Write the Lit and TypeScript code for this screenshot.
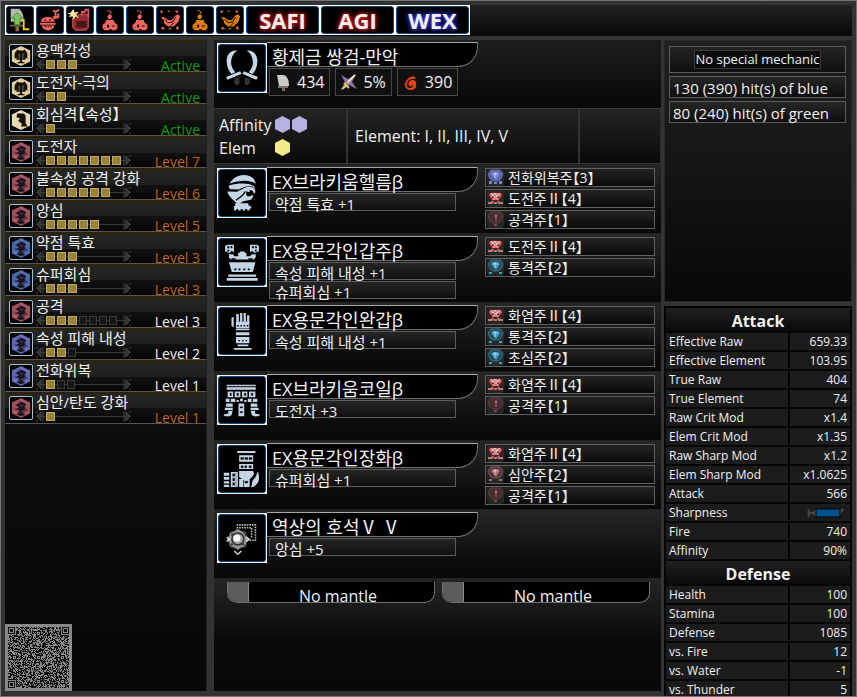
import { LitElement, html, svg, css, nothing } from "lit";
import { customElement, property } from "lit/decorators.js";

type Tone = "gold" | "bone" | "red" | "blue" | "violet";
interface Skill { name: string; tone: Tone; on: number; off?: number; level: string; state: string }
interface Deco { name: string; slot: number; hue: string }
interface Gear { icon: string; name: string; skills: string[]; decos: Deco[] }

const skills: Skill[] = [
  { name: "용맥각성", tone: "gold", on: 3, level: "Active", state: "active" },
  { name: "도전자-극의", tone: "gold", on: 2, level: "Active", state: "active" },
  { name: "회심격【속성】", tone: "bone", on: 1, level: "Active", state: "active" },
  { name: "도전자", tone: "red", on: 7, level: "Level 7", state: "max" },
  { name: "불속성 공격 강화", tone: "red", on: 6, level: "Level 6", state: "max" },
  { name: "앙심", tone: "red", on: 5, level: "Level 5", state: "max" },
  { name: "약점 특효", tone: "blue", on: 3, level: "Level 3", state: "max" },
  { name: "슈퍼회심", tone: "blue", on: 3, level: "Level 3", state: "max" },
  { name: "공격", tone: "red", on: 3, off: 4, level: "Level 3", state: "part" },
  { name: "속성 피해 내성", tone: "violet", on: 2, off: 1, level: "Level 2", state: "part" },
  { name: "전화위복", tone: "violet", on: 1, off: 2, level: "Level 1", state: "part" },
  { name: "심안/탄도 강화", tone: "red", on: 1, level: "Level 1", state: "max" },
];

const d = (name: string, slot: number, hue: string): Deco => ({ name, slot, hue });
const gear: Gear[] = [
  { icon: "helm", name: "EX브라키움헬름β", skills: ["약점 특효 +1"], decos: [d("전화위복주", 3, "#7484d8"), d("도전주Ⅱ", 4, "#d07474"), d("공격주", 1, "#8a4348")] },
  { icon: "chest", name: "EX용문각인갑주β", skills: ["속성 피해 내성 +1", "슈퍼회심 +1"], decos: [d("도전주Ⅱ", 4, "#d07474"), d("통격주", 2, "#3d9cc8")] },
  { icon: "arm", name: "EX용문각인완갑β", skills: ["속성 피해 내성 +1"], decos: [d("화염주Ⅱ", 4, "#d07474"), d("통격주", 2, "#3d9cc8"), d("초심주", 2, "#3d9cc8")] },
  { icon: "waist", name: "EX브라키움코일β", skills: ["도전자 +3"], decos: [d("화염주Ⅱ", 4, "#d07474"), d("공격주", 1, "#8a4348")] },
  { icon: "leg", name: "EX용문각인장화β", skills: ["슈퍼회심 +1"], decos: [d("화염주Ⅱ", 4, "#d07474"), d("심안주", 2, "#a8686e"), d("공격주", 1, "#8a4348")] },
  { icon: "charm", name: "역상의 호석Ⅴ Ⅴ", skills: ["앙심 +5"], decos: [] },
];

const attack: [string, string][] = [
  ["Effective Raw", "659.33"], ["Effective Element", "103.95"], ["True Raw", "404"], ["True Element", "74"],
  ["Raw Crit Mod", "x1.4"], ["Elem Crit Mod", "x1.35"], ["Raw Sharp Mod", "x1.2"], ["Elem Sharp Mod", "x1.0625"],
  ["Attack", "566"], ["Sharpness", ""], ["Fire", "740"], ["Affinity", "90%"],
];
const defense: [string, string][] = [
  ["Health", "100"], ["Stamina", "100"], ["Defense", "1085"], ["vs. Fire", "12"], ["vs. Water", "-1"], ["vs. Thunder", "5"],
];

const powder = svg`
  <path d="M12 5h2l2 1v2l-2 1" fill="none" stroke="currentColor" stroke-width="1"/>
  <path d="M12 11l2-2 3 1v2l-1 1 1 3h-5l1-3z" fill="currentColor"/>
  <path d="M11 15h8l1 3 3 2v4l-2 2H9l-2-2v-4l3-2z" fill="currentColor"/>
  <path d="M12 20h2v3h-2zM17 21h3v1h-3zM14 25h3v1h-3zM9 23h1v1H9zM13 14h3v1h-3z" fill="#000"/>`;
const pepper = svg`
  <path d="M5 12h4l4 3 4 0 4-5 3-1 2 2-2 6-5 5-6 0-4-3-1-4z" fill="currentColor"/>
  <path d="M9 14l4 4 5-1 3-5M15 22l4-4" stroke="#000" stroke-width="1" fill="none"/>
  <path d="M4 5h4l-2 3zM12 5h3l-1 2zM20 5h4l-1 3zM5 25l2-3 3 3zM13 25l2-2 2 2zM21 25l2-4 2 4z" fill="currentColor"/>`;

const buffs = [
  { label: "Long stay up", color: "#bbb", art: svg`
    <path d="M5 3h9c4 3 5 8 5 14H5z" fill="#b6b8b4"/><path d="M4 20h15v2H4z" fill="#7b5635"/><path d="M10 22h4v5h-4z" fill="#8d6a45"/>
    <path d="M12 7l6 6h-3v7H9v-7H6z" fill="#7cc45a" stroke="#4a8a38" stroke-width="1"/>
    <path d="M19 14v11h6" fill="none" stroke="#f6c800" stroke-width="2"/>` },
  { label: "Meal", color: "#f26660", art: svg`
    <path d="M5 17c0-7 15-7 15 0zM4 18h17v2H4zM6 21h14c-2 7-12 7-14 0z" fill="currentColor"/>
    <path d="M18 5l3 1 4-2M21 6v7h-2M18 12h6v-4" fill="none" stroke="currentColor" stroke-width="2"/>
    <path d="M9 15h2M14 15h2M10 21v2M13 21v2M16 21v2" stroke="#000"/>` },
  { label: "Demondrug", color: "#f26660", art: svg`
    <path d="M14 9h10v14l-2 3H10l-3-3V13z" fill="#8f2d31" stroke="#c95557" stroke-width="1"/><path d="M11 16h11v7H11z" fill="#4c1418"/>
    <path d="M17 10V6l3 1 1-3h3v8" fill="none" stroke="#d45c5c" stroke-width="2"/>
    <path d="M8 3l1 4 5-1-3 3 3 4-4-2-2 4-1-4-4 1 2-3-4-1 4-1z" fill="#ffe79a"/>` },
  { label: "Might seed", color: "#f26660", art: powder },
  { label: "Might pill", color: "#f26660", art: powder },
  { label: "Dash juice", color: "#f26660", art: pepper },
  { label: "Armor seed", color: "#de7c10", art: powder },
  { label: "Armor skin", color: "#de7c10", art: pepper },
];

const gearArt: Record<string, unknown> = {
  swords: svg`<g fill="#c4d5e6"><path d="M60 20C38 18 26 34 27 56c1 16 6 28 15 38l12-6C44 76 40 66 41 54c1-14 7-26 19-34zM90 20c22-2 34 14 33 36-1 16-6 28-15 38l-12-6c10-12 14-22 13-34-1-14-7-26-19-34z"/>
    <path d="M25 103l44-18 5 8-44 19zM125 103L81 85l-5 8 44 19z"/></g>
    <path d="M52 107l14-1 1 18-8 6-9-8zM98 107l-14-1-1 18 8 6 9-8z" fill="#30353a"/>`,
  helm: svg`<g fill="#c4d5e6"><path d="M36 46C45 30 60 20 80 19c20 0 35 9 38 27-20-12-48-12-82 0z"/>
    <path d="M36 51c28-8 60-8 76 2l6 14-10-12c-18-4-30 2-42 9l-26-1c-7-2-8-8-4-12z"/>
    <path d="M29 70l30 1 24-12c14-8 34-4 34 14l-5 5c0-14-20-17-24-4-2 8 5 13 13 11l6-4 4 3-8 12-24 5-15 10C47 96 34 87 29 70z"/>
    <path d="M92 65h7v7h-7z"/><path d="M52 107h43v6l9 4v5l-5 3v5h-8v-5h-6v5h-8v-5h-6v5h-8v-5h-6v5h-7v-8l-1-5 6-4z"/></g>
    <path d="M56 98l20-15 10-13" fill="none" stroke="#000" stroke-width="4"/>`,
  chest: svg`<g fill="#c4d5e6"><path d="M22 25l6-4h22v24l-7-5-7 7-14-6zM100 21h22l6 4v16l-14 6-7-7-7 5z"/>
    <path d="M34 51h13l4 6h12V46h6v-4h14v4h6v11h12l4-6h13v10l-6 6H40l-6-6z"/>
    <path d="M34 76h83l-8 30H43zM32 114h87v7H32zM27 125h97v9H27z"/></g>
    <path d="M29 26h6v6h-6zM39 26h6v6h-6zM29 37h6v5h-6zM106 26h6v6h-6zM116 26h6v6h-6zM115 37h6v5h-6zM51 95h6v6h-6zM64 95h6v6h-6zM79 95h6v6h-6zM93 95h6v6h-6zM42 63h13v5H42zM95 63h13v5H95z" fill="#000"/>`,
  arm: svg`<g fill="#c4d5e6"><path d="M57 22h8v28h-8zM69 19h7v30h-7zM80 19h7v30h-7zM91 26h7v24h-7zM42 33l7-2v32l-7-4z"/>
    <path d="M56 46h42v27H56zM56 79h42v9H56zM56 94h42v19H56zM61 117h34v6H61zM50 128h55v6H50z"/></g>
    <path d="M60 56h5v5h-5zM70 56h5v5h-5zM80 56h5v5h-5zM90 56h5v5h-5zM56 66h42v2H56zM64 103h5v4h-5zM75 103h5v4h-5zM86 103h5v4h-5z" fill="#000"/>`,
  waist: svg`<g fill="#c4d5e6"><path d="M27 27h91v5H27zM27 35h91v8H27zM30 48h17v18H30zM52 48h18v18H52zM75 48h17v18H75zM97 48h20v18H97z"/>
    <path d="M24 71h12v10H24zM40 71h14v10H40zM58 75h7v6h-7zM69 71h9v8h-9zM82 75h7v6h-7zM93 71h12v10H93zM109 71h14v10h-14zM64 86h18v40H64z"/>
    <path d="M26 86h20v10H24zM22 99h24v7H20zM32 109h14l-4 14-10 4-14-2v-5l14-3zM122 86h-20v10h22zM126 99h-24v7h26zM116 109h-14l4 14 10 4 14-2v-5l-14-3z"/></g>
    <path d="M37 54h5v7h-5zM59 54h5v7h-5zM82 54h5v7h-5zM104 54h5v7h-5zM69 96h8v4h-8zM69 111h8v4h-8zM38 29v4M50 29v4M62 29v4M74 29v4M86 29v4M98 29v4M108 29v4" fill="#000" stroke="#000"/>`,
  leg: svg`<g fill="#c4d5e6"><path d="M60 19h57v6H60zM66 32h44v20H66zM66 59h44v16H66zM66 81h44l3 9-7 11-7 6v24H81v-21l-15-10z"/>
    <path d="M18 87h17v9H18zM18 100h17v9H18zM18 113h17v7H18zM18 124h17v7H18zM40 84h22v47H40zM66 106h13v25H66zM111 107c8-4 8-13 14-24 7 23 4 38-15 48h-7c6-7 1-17 8-24z"/></g>
    <path d="M71 39h9v6h-9zM84 39h9v6h-9zM97 39h9v6h-9zM72 65h7v6h-7zM84 65h6v6h-6zM97 65h7v6h-7zM46 90h6v8h-6zM46 104h6v8h-6zM46 118h6v8h-6zM56 84v48M84 113h9v6h-9z" fill="#000" stroke="#000"/>`,
  charm: svg`<path d="M58 34h59v48H98M58 43h47v31" fill="none" stroke="#bbb" stroke-width="5" stroke-dasharray="5 3"/>
    <path d="M62 46l12 8 12 3 3 11 9 11-9 11-3 12-12 3-12 7-12-7-12-3-3-12-8-11 8-11 3-11 12-3z" fill="#999" stroke="#444" stroke-width="3"/>
    <circle cx="62" cy="78" r="21" fill="#333"/><circle cx="62" cy="78" r="16" fill="#a9a9a9"/><circle cx="59" cy="75" r="11" fill="#fff"/>
    <path d="M27 72l9 7-9 7M88 73l10 6-10 7M51 116l11 10 11-10" fill="none" stroke="#ddd" stroke-width="4"/>
    <path d="M40 58l6 4-5 6M78 58l8 4-2 8M40 100l3-8 6 6M82 100l-3-8-6 6" fill="none" stroke="#222" stroke-width="3"/>`,
};

const hexPoints = "12,1 22,6 22,18 12,23 2,18 2,6";
const hexFill: Record<Tone, string> = { gold: "#e2cd9d", bone: "#e6d8b4", red: "#9c4f58", blue: "#4668a8", violet: "#6264b4" };
function skillIcon(tone: Tone) {
  const art = tone === "gold"
    ? svg`<path d="M8 5l2 1h4l2-1 3 4v6l-2-1v2h-4v2l3 1v1H8v-1l3-1v-2H7v-2l-2 1V9z" fill="#15120c"/><path d="M10 9v6M14 9v6" stroke="#8d7a50" stroke-width="1"/>`
    : tone === "bone"
    ? svg`<path d="M8 5h7l2 2v8l2 4h-7l1-3-4-3 2-3-4-1z" fill="#14110c"/>`
    : svg`<path d="M6 9l6-4 6 3-2 2 1 3-5 3-3 2 1-4-3-1 3-2zM7 19l6-3 4 3-5 2z" fill="#1a1520"/><path d="M5 13l5 1M14 16l5-2" stroke="#1a1520" stroke-width="1"/><path d="M4 16l3 1M17 6l3 2M19 17l-3 2M12 3l2 1M11 9l3 1" stroke="#fff" stroke-opacity=".3"/>`;
  return html`<svg class="skill-icon" viewBox="0 0 24 24" aria-hidden="true"><polygon points=${hexPoints} fill=${hexFill[tone]} />${art}</svg>`;
}

function gem(x: Deco) {
  const small = x.slot < 2;
  return html`<svg class="gem" viewBox="0 0 17 17" aria-hidden="true">
    <rect width="17" height="17" rx="3" fill="#242827" />
    ${x.slot === 4
      ? svg`<path d="M1 3l3-1h9l3 1-1 5-3 3H5L2 8z" fill="#5c1c22"/><path d="M4 3h9l2 2-4 5H6L2 5z" fill=${x.hue}/><path d="M4 3l2 3 2-3 2 3 3-3M6 10l1-3h3l1 3" stroke="#fff" stroke-opacity=".6" fill="none"/><path d="M5 7l2 1M12 7l-2 1" stroke="#3c0c12"/><path d="M1 13h4l1-2M16 13h-4l-1-2M7 13h3" stroke=${x.hue} stroke-width="2" fill="none"/>`
      : svg`<path d="M4 1h9l3 4-2 5-3 2H6L3 10 1 5z" fill=${x.hue} fill-opacity=${x.slot === 3 ? 0.7 : 0.3} stroke=${x.hue} stroke-opacity=".6"/><path d=${small ? "M8 3h2v7H8z" : "M6 3h5l2 2-4 6-5-6z"} fill=${x.hue}/><path d=${small ? "M9 4v2" : "M6 5h5M8 3v6"} stroke="#fff" stroke-opacity=".55"/><path d=${small ? "M7 13h3v2H7z" : x.slot === 3 ? "M2 12h3v3H2zM7 13h3v2H7zM12 12h3v3h-3z" : "M2 13h3v2H2zM12 13h3v2h-3z"} fill=${x.hue}/>`}
  </svg>`;
}

function qrPath(): string {
  const n = 61;
  let seed = 90210;
  let out = "";
  const ring = (x: number, y: number, cx: number, cy: number, r: number) => {
    const m = Math.max(Math.abs(x - cx), Math.abs(y - cy));
    return m > r ? null : r >= 4 ? m <= 1 || m === 3 : m !== 1;
  };
  for (let y = 0; y < n; y++) {
    for (let x = 0; x < n; x++) {
      seed = (seed * 1103515245 + 12345) & 0x7fffffff;
      let on = ((seed >> 16) & 1) === 1;
      for (const cx of [6, 30, 54]) for (const cy of [6, 30, 54]) on = ring(x, y, cx, cy, 2) ?? on;
      for (const [cx, cy] of [[3, 3], [57, 3], [3, 57]]) on = ring(x, y, cx, cy, 4) ?? on;
      if (on) out += `M${x} ${y}h1v1h-1z`;
    }
  }
  return out;
}
const qr = qrPath();

const base = css`
  * { box-sizing: border-box; }
  ul { list-style: none; margin: 0; padding: 0; }
  button { font: inherit; color: inherit; padding: 0; margin: 0; border: 0; background: none; }
  svg { display: block; }
  .half { font-feature-settings: "halt"; }
`;

@customElement("skill-list")
class SkillList extends LitElement {
  static styles = [base, css`
    :host { display: block; }
    li { height: 32px; display: grid; grid-template-columns: 31px 1fr auto; grid-template-rows: 17px 12px;
      border-top: 2px solid #2d2109; border-bottom: 1px solid #555;
      background: linear-gradient(#252724 0, #1f201e 50%, #121212 50%, #070707); }
    .skill-icon { width: 24px; height: 24px; margin: 2px 0 0 4px; grid-row: 1 / 3; background: #000; border: 1px solid #a5bccb; border-radius: 2px; }
    .name { font-size: 15px; line-height: 16px; grid-column: 2 / 4; white-space: nowrap; }
    .bar { width: 95px; height: 11px; display: flex; align-items: center; gap: 2px;
      background: linear-gradient(#0000 5px, #383838 5px, #383838 6px, #0000 6px); }
    .bar svg { width: 8px; height: 11px; }
    .pip { width: 9px; height: 9px; background: #97823a; border: 1px solid #c2aa58; }
    .pip.off { background: #161616; border: 1px solid #3c3c3c; width: 8px; }
    .end { margin-left: auto; }
    .level { font-size: 14px; line-height: 14px; height: 12px; padding-right: 6px; white-space: nowrap; }
    .active { color: #069c06; } .max { color: #bf640f; } .part { color: #f2f2f2; }
  `];
  render() {
    return html`<ul>${skills.map((s) => html`<li>
      ${skillIcon(s.tone)}
      <span class="name">${s.name.split(/([【】])/).map((t) => (t === "【" || t === "】" ? html`<span class="half">${t}</span>` : t))}</span>
      <span class="bar">
        <svg viewBox="0 0 8 11"><path d="M7 0v11M5 1L1 5l4 5zM1 0v2M1 9v2" stroke="#444" fill="#333" /></svg>
        ${Array.from({ length: s.on }, () => html`<i class="pip"></i>`)}
        ${Array.from({ length: s.off ?? 0 }, () => html`<i class="pip off"></i>`)}
        <svg class="end" viewBox="0 0 8 11"><path d="M1 0v11M3 1l4 4-4 5zM7 0v2M7 9v2" stroke="#444" fill="#333" /></svg>
      </span>
      <span class="level ${s.state}">${s.level}</span>
    </li>`)}</ul>`;
  }
}

@customElement("gear-row")
class GearRow extends LitElement {
  static styles = [base, css`
    :host { display: grid; grid-template-columns: 50px 211px 170px; column-gap: 0; height: 69px; padding: 2px 0 0 3px;
      background: linear-gradient(#252725, #0e0e0e 70%, #080808); border-top: 1px solid #202020; }
    .frame { width: 50px; height: 50px; padding: 1px; margin-top: 1px; background: #f1f1f1; }
    .frame svg { width: 48px; height: 48px; background: #000; border: 1px solid #0b4a83; border-radius: 3px; }
    .title { height: 25px; padding-left: 5px; border: 1px solid #707070; border-top-color: #aaa; border-left: 0; border-radius: 0 0 20px 0;
      background: #000; font-size: 18px; line-height: 28px; white-space: nowrap; }
    .skills { padding: 1px 0 0 2px; display: grid; gap: 1px; }
    .skill { width: 187px; height: 18px; padding-left: 5px; border: 1px solid #5c5c5c;
      background: linear-gradient(#242624, #101010); font-size: 15px; line-height: 20px; white-space: nowrap; }
    .decos { display: grid; gap: 2px; align-content: start; padding-top: 1px; margin-left: 7px; width: 170px; }
    .deco { height: 19px; display: flex; align-items: center; gap: 4px; padding-left: 1px; border: 1px solid #606060;
      background: linear-gradient(#222422, #0a0a0a); font-size: 14px; line-height: 17px; white-space: nowrap; }
    .gem { width: 17px; height: 17px; }
  `];
  @property({ attribute: false }) item!: Gear;
  render() {
    const g = this.item;
    return html`
      <div class="frame"><svg viewBox="3 3 144 144" aria-hidden="true">${gearArt[g.icon]}</svg></div>
      <div><div class="title">${g.name}</div>
        <div class="skills">${g.skills.map((s) => html`<div class="skill">${s}</div>`)}</div></div>
      ${g.decos.length ? html`<div class="decos">${g.decos.map((x) => html`<div class="deco">${gem(x)}<span>${x.name}<span class="half">【${x.slot}】</span></span></div>`)}</div>` : nothing}`;
  }
}

@customElement("stat-table")
class StatTable extends LitElement {
  static styles = [base, css`
    :host { display: block; }
    table { width: 100%; margin-top: -2px; border-collapse: separate; border-spacing: 2px; table-layout: fixed; background: #050505; font-size: 12px; }
    .key { width: 122px; }
    caption { height: 25px; padding: 2px 0 0; border: 2px solid #050505; border-bottom: 0; background: linear-gradient(#202220, #090909); font-size: 16px; line-height: 22px; font-weight: 700; }
    th { font-weight: 400; text-align: left; }
    td { text-align: right; }
    th, td { height: 17px; padding: 0 3px; background: #1c1c1c; line-height: 17px; white-space: nowrap; }
    .blade { width: 40px; height: 12px; margin-left: auto; }
  `];
  @property() heading = "";
  @property({ attribute: false }) rows: [string, string][] = [];
  render() {
    return html`<table><caption>${this.heading}</caption><colgroup><col class="key" /><col /></colgroup>
      ${this.rows.map(([k, v]) => html`<tr><th scope="row">${k}</th><td>${v || html`
        <svg class="blade" viewBox="0 0 40 12" role="img" aria-label="Blue"><path d="M0 1h3v3h3l3-3h30l-7 10H9L6 8H3v3H0z" fill="#444" stroke="#111"/><rect x="9" y="2" width="24" height="8" fill="#00508e" stroke="#000"/></svg>`}</td></tr>`)}
    </table>`;
  }
}

@customElement("app-root")
class AppRoot extends LitElement {
  static styles = [base, css`
    :host { display: block; color: #f0f0f0; font-family: "Open Sans", "Noto Sans CJK KR", sans-serif; }
    .shell { height: 100vh; overflow: hidden; display: grid; grid-template-rows: 31px minmax(0, 1fr); row-gap: 4px;
      padding: 4px 4px 5px; background: #333; border: 1px solid #747474; }
    .top { display: flex; background: linear-gradient(#222, #070707); }
    .buff { width: 30px; height: 30px; padding: 1px; background: #fff; }
    .buff svg, .tag span { width: 28px; height: 28px; background: #000; border: 1px solid #0a4880; border-radius: 3px; }
    .tag { width: 75px; height: 30px; padding: 1px; background: #fff; font-size: 22px; font-weight: 700; line-height: 26px; }
    .tag span { display: block; width: 73px; text-align: center; }
    .crimson { text-shadow: 0 0 3px #d22, 0 0 5px #b11, 0 0 7px #911; }
    .indigo { text-shadow: 0 0 3px #44e, 0 0 5px #33c, 0 0 7px #229; }
    .cols { display: grid; grid-template-columns: 202px minmax(0, 1fr) 188px; grid-template-rows: minmax(0, 1fr); min-height: 0; }
    .left { display: flex; flex-direction: column; justify-content: space-between; border-right: 1px solid #202020; background: linear-gradient(#161616, #070707); min-height: 0; }
    .qr { width: 67px; height: 67px; background: #888; }
    .mid { margin: 0 3px 0 7px; background: linear-gradient(#1c1c1c, #080808); min-height: 0; overflow: hidden; }
    .weapon { display: grid; grid-template-columns: 50px 211px; height: 68px; padding: 2px 0 0 3px; background: linear-gradient(#1d1d1d, #080808); }
    .frame { width: 50px; height: 50px; padding: 1px; margin-top: 1px; background: #f1f1f1; }
    .frame svg { width: 48px; height: 48px; background: #000; border: 1px solid #0b4a83; border-radius: 3px; }
    .title { height: 25px; padding-left: 5px; border: 1px solid #707070; border-top-color: #aaa; border-left: 0; border-radius: 0 0 20px 0;
      background: #000; font-size: 18px; line-height: 28px; white-space: nowrap; }
    .chips { display: flex; gap: 5px; padding: 1px 0 0 2px; }
    .chip { height: 28px; display: flex; align-items: center; gap: 5px; padding: 0 5px 0 4px; border: 1px solid #484848; background: #101010; font-size: 16px; }
    .chip svg { width: 18px; height: 20px; }
    .traits { display: grid; grid-template-columns: 133px 231px 1fr; height: 56px; gap: 1px; background: #3a3a3a; border: 1px solid #3a3a3a; border-width: 1px 0; font-size: 16px; }
    .traits > div { background: linear-gradient(#232523, #090909); border-right: 1px solid #2c2c2c; }
    .augs { display: grid; grid-template-columns: 52px 1fr; grid-auto-rows: 23px; align-items: center; column-gap: 4px; padding: 4px 5px; }
    .hexes { display: flex; gap: 2px; }
    .hexes svg { width: 15px; height: 17px; }
    .elements { display: flex; align-items: center; padding-left: 7px; white-space: nowrap; }
    .mantles { display: grid; grid-template-columns: 208px 208px; gap: 7px; padding: 3px 13px 40px; background: linear-gradient(#242624, #171717 50%, #080808); border-top: 1px solid #222; }
    .mantle { height: 21px; display: flex; border: 1px solid #707070; border-top: 0; border-radius: 0 0 10px 10px; background: #000; font-size: 16px; line-height: 28px; }
    .swatch { width: 21px; background: #5c5c5c; border-right: 1px solid #888; border-bottom-left-radius: 9px; }
    .grow { flex: 1; text-align: center; padding-right: 7px; }
    .right { min-width: 0; }
    .mech { height: 262px; padding: 5px 5px 5px 4px; display: grid; gap: 3px; align-content: start; border: 1px solid #282828; background: linear-gradient(#202120, #080808); margin-bottom: 6px; }
    .mech-head { height: 27px; padding: 3px 24px; border: 1px solid #5c5c5c; background: linear-gradient(#222422, #101010); }
    .mech-btn { display: block; width: 100%; height: 19px; border: 1px solid #3a3a3a; background: #0b0b0b; font-size: 13px; line-height: 17px; white-space: nowrap; }
    .hit { height: 22px; padding-left: 3px; border: 1px solid #5c5c5c; background: linear-gradient(#252725, #0d0d0d); font-size: 15px; line-height: 22px; white-space: nowrap; }
  `];
  render() {
    const hex = (c: string) => html`<svg viewBox="0 0 15 17" aria-hidden="true"><path d="M7.500 0L15 4v9l-7.500 4L0 13V4z" fill=${c} /></svg>`;
    return html`<div class="shell">
      <header class="top">
        ${buffs.map((b) => html`<button class="buff" aria-label=${b.label}><svg viewBox="1 1 28 28" color=${b.color}>${b.art}</svg></button>`)}
        <button class="tag crimson"><span>SAFI</span></button><button class="tag crimson"><span>AGI</span></button><button class="tag indigo"><span>WEX</span></button>
      </header>
      <main class="cols">
        <section class="left"><skill-list></skill-list>
          <svg class="qr" viewBox="-3 -3 67 67" shape-rendering="crispEdges" role="img" aria-label="QR code"><path d=${qr} fill="#111" /></svg>
        </section>
        <section class="mid">
          <div class="weapon">
            <div class="frame"><svg viewBox="3 3 144 144" aria-hidden="true">${gearArt.swords}</svg></div>
            <div><div class="title">황제금 쌍검-만악</div>
              <div class="chips">
                <span class="chip"><svg viewBox="0 0 18 20"><path d="M3 3h7c4 2 5 6 5 11H5z" fill="#c9c9c6" /><path d="M4 14h10v2H4z" fill="#75706a" /><path d="M8 16h3v3H8z" fill="#8b6845" /></svg>434</span>
                <span class="chip"><svg viewBox="0 0 18 20"><path d="M1 3l7 4 8-5-4 8 5 7-8-4-8 5 4-8z" fill="#8f78a8" /><path d="M15 3l-8 8M4 11l5 5M2 17l4-3" stroke="#e1c483" stroke-width="2" /><path d="M15 3l-7 7" stroke="#fff" /></svg>5%</span>
                <span class="chip"><svg viewBox="0 0 18 20"><path d="M12 4C6 5 3 9 3 13c0 3 3 5 6 5 4 0 6-3 5-7 0-3-4-4-6-2-2 1-2 5 0 5 2 1 3-1 2-2 2 1 1 4-2 4-3 0-4-3-3-5 1-4 5-5 10-4-1-1-3-1-3-4z" fill="#f4440e" /></svg>390</span>
              </div></div>
          </div>
          <div class="traits">
            <div class="augs"><span>Affinity</span><span class="hexes">${hex("#b5b2e2")}${hex("#b5b2e2")}</span><span>Elem</span><span class="hexes">${hex("#f1ec88")}</span></div>
            <div class="elements">Element: I, II, III, IV, V</div><div></div>
          </div>
          ${gear.map((g) => html`<gear-row .item=${g}></gear-row>`)}
          <div class="mantles">${[0, 1].map(() => html`<div class="mantle"><i class="swatch"></i><span class="grow">No mantle</span></div>`)}</div>
        </section>
        <aside class="right">
          <div class="mech"><div class="mech-head"><button class="mech-btn">No special mechanic</button></div>
            <div class="hit">130 (390) hit(s) of blue</div><div class="hit">80 (240) hit(s) of green</div></div>
          <stat-table heading="Attack" .rows=${attack}></stat-table>
          <stat-table heading="Defense" .rows=${defense}></stat-table>
        </aside>
      </main>
    </div>`;
  }
}
